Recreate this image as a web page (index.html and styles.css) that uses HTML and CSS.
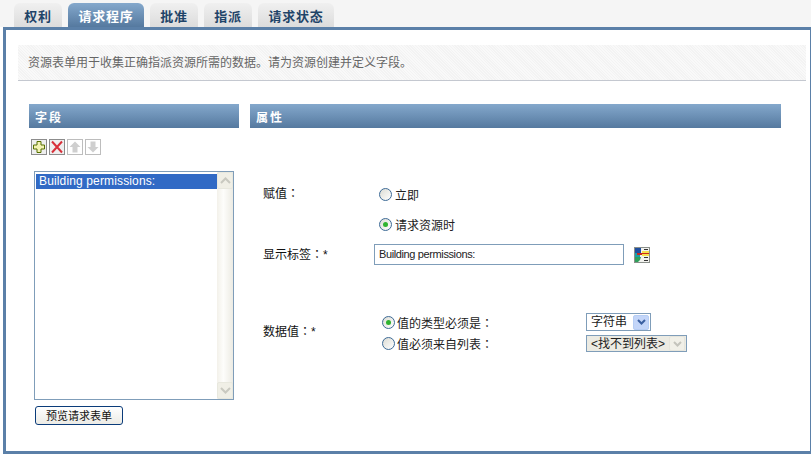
FILE: index.html
```html
<!DOCTYPE html>
<html lang="zh-CN">
<head>
<meta charset="utf-8">
<title>请求程序</title>
<link rel="stylesheet" href="styles.css">
</head>
<body>
<nav class="tabs">
  <a class="tab tab-short">权利</a>
  <a class="tab tab-long tab-active">请求程序</a>
  <a class="tab tab-short">批准</a>
  <a class="tab tab-short">指派</a>
  <a class="tab tab-long">请求状态</a>
</nav>
<main class="panel">
  <p class="info">资源表单用于收集正确指派资源所需的数据。请为资源创建并定义字段。</p>
  <div class="columns">
    <section class="col-fields">
      <h2 class="head">字段</h2>
      <div class="toolbar">
        <span class="tool">
          <svg width="14" height="14" viewBox="0 0 14 14"><path d="M5 1.500h4v3.500h3.500v4H9v3.500H5V9H1.500V5H5z" fill="#f3f3b4" stroke="#566f00"/></svg>
        </span>
        <span class="tool">
          <svg width="14" height="14" viewBox="0 0 14 14"><path d="M2 1.500l10 11M12 1.500L2 12.500" fill="none" stroke="#d8303a" stroke-width="2"/></svg>
        </span>
        <span class="tool tool-off">
          <svg width="14" height="14" viewBox="0 0 14 14"><path d="M7 1.500l5.500 5.500H9.500v5.500h-5V7H1.500z" fill="#cfcfcf"/></svg>
        </span>
        <span class="tool tool-off">
          <svg width="14" height="14" viewBox="0 0 14 14"><path d="M7 12.500L1.500 7h3V1.500h5V7h3z" fill="#cfcfcf"/></svg>
        </span>
      </div>
      <div class="listbox">
        <ul class="list-items">
          <li class="list-item">Building permissions:</li>
        </ul>
        <div class="scrollbar">
          <span class="scroll-btn"><svg width="11" height="7" viewBox="0 0 11 7"><path d="M1 6l4.500-4.500L10 6" fill="none" stroke="#c9c9c0" stroke-width="2"/></svg></span>
          <span class="scroll-btn"><svg width="11" height="7" viewBox="0 0 11 7"><path d="M1 1l4.500 4.500L10 1" fill="none" stroke="#c9c9c0" stroke-width="2"/></svg></span>
        </div>
      </div>
      <button class="btn" type="button">预览请求表单</button>
    </section>
    <section class="col-props">
      <h2 class="head">属性</h2>
      <div class="form" lang="zh-TW">
        <div class="row row-assign">
          <span class="label">赋值：</span>
          <div class="radio-stack">
            <label class="radio-line"><span class="radio"></span><span class="radio-text">立即</span></label>
            <label class="radio-line"><span class="radio radio-on"><span class="dot"></span></span><span class="radio-text">请求资源时</span></label>
          </div>
        </div>
        <div class="row row-display">
          <span class="label">显示标签：*</span>
          <div class="text-field">Building permissions:</div>
          <svg class="picker" width="16" height="16" viewBox="0 0 16 16">
            <rect width="16" height="16" fill="#8a8f8a"/>
            <rect x="1" y="1" width="14" height="14" fill="#f2f2ee"/>
            <path d="M1 1h6v5H1z" fill="#1f4f9f"/>
            <path d="M1 6h5v4H1z" fill="#17a0a8"/>
            <path d="M1 10h6l-1 3-2 2H1z" fill="#2f9f5a"/>
            <rect x="3" y="6" width="6" height="2" fill="#c8281e"/>
            <rect x="8" y="4" width="7" height="5" fill="#f4e04c"/>
            <rect x="8" y="6" width="7" height="1" fill="#c8281e"/>
            <path d="M10 2h4v1h-4zM10 10h4v1h-4zM10 13h4v1h-4z" fill="#333"/>
          </svg>
        </div>
        <div class="row row-data">
          <span class="label label-data">数据值：*</span>
          <div class="data-grid">
            <label class="radio-line radio-line-tight"><span class="radio radio-on"><span class="dot"></span></span><span class="radio-text">值的类型必须是：</span></label>
            <div class="select">
              <span class="select-text">字符串</span>
              <span class="select-arrow"><svg width="9" height="6" viewBox="0 0 9 6"><path d="M1 1l3.500 3.500L8 1" fill="none" stroke="#3a5fa0" stroke-width="2"/></svg></span>
            </div>
            <label class="radio-line radio-line-tight"><span class="radio"></span><span class="radio-text">值必须来自列表：</span></label>
            <div class="select select-off">
              <span class="select-text">&lt;找不到列表&gt;</span>
              <span class="select-arrow"><svg width="9" height="6" viewBox="0 0 9 6"><path d="M1 1l3.500 3.500L8 1" fill="none" stroke="#c4c4bc" stroke-width="2"/></svg></span>
            </div>
          </div>
        </div>
      </div>
    </section>
  </div>
</main>
</body>
</html>
```

FILE: styles.css
```css
* { box-sizing: border-box; }

html, body {
  margin: 0;
  height: 457px;
  overflow: hidden;
  background: #fff;
}

body {
  width: 811px;
  font-family: "Liberation Sans", "Noto Sans CJK SC", sans-serif;
  font-size: 12px;
  color: #222;
}

.tabs {
  display: flex;
  align-items: flex-end;
  gap: 6px;
  height: 27px;
  padding-left: 14px;
  background: #f5f5f5;
}

.tab {
  display: flex;
  align-items: center;
  justify-content: center;
  height: 24px;
  border-radius: 6px 6px 0 0;
  background: linear-gradient(#f0f0f0, #dcdcdc);
  color: #1f4468;
  font-weight: 700;
  font-size: 13px;
  letter-spacing: 0.8px;
}

.tab-short { width: 48px; }
.tab-long { width: 76px; }

.tab-active {
  background: linear-gradient(#84a8cc, #55799f);
  color: #fff;
}

.panel {
  width: 808px;
  height: 427px;
  margin-left: 3px;
  border: solid #5b80a8;
  border-width: 3px 1px 3px 3px;
  background: #fff;
}

.info {
  width: 788px;
  height: 36px;
  margin: 15px 0 0 12px;
  padding-left: 10px;
  line-height: 37px;
  color: #666;
  background-color: #f6f6f6;
  background-image: repeating-linear-gradient(45deg, #f9f9f9 0 1px, #f3f3f3 1px 2px);
  border-bottom: 1px solid #c4c8d0;
}

.columns {
  display: flex;
  gap: 11px;
  margin: 23px 0 0 23px;
}

.col-fields { width: 210px; }
.col-props { width: 531px; }

.head {
  height: 24px;
  margin: 0;
  padding-left: 6px;
  background: linear-gradient(#84a8cc, #55799f);
  color: #fff;
  font-size: 12px;
  font-weight: 700;
  letter-spacing: 2px;
  line-height: 28px;
}

.toolbar {
  display: flex;
  gap: 2px;
  margin: 11px 0 0 2px;
}

.tool {
  display: flex;
  align-items: center;
  justify-content: center;
  width: 16px;
  height: 16px;
  border: 1px solid #8c8c8c;
  background: #efefef;
}

.tool-off {
  border-color: #bdbdbd;
  background: #fff;
}

.listbox {
  display: flex;
  width: 200px;
  height: 229px;
  margin: 16px 0 0 5px;
  padding: 1px 0 1px 1px;
  border: 1px solid #7f9db9;
}

.list-items {
  flex: 1;
  margin: 0;
  padding: 0;
  list-style: none;
}

.list-item {
  height: 15px;
  margin-top: 1px;
  padding-left: 3px;
  background: #316ac5;
  color: #fff;
  font-size: 12px;
  letter-spacing: 0.14px;
  line-height: 15px;
}

.scrollbar {
  display: flex;
  flex-direction: column;
  justify-content: space-between;
  width: 16px;
  margin: -1px 0;
  background: linear-gradient(90deg, #f3f1ea, #fdfdfb 40%, #ecebe3);
}

.scroll-btn {
  display: flex;
  align-items: center;
  justify-content: center;
  height: 17px;
  border: 1px solid #e8e8de;
  border-radius: 2px;
  background: #f0efe6;
}

.btn {
  display: block;
  width: 88px;
  height: 19px;
  margin: 6px 0 0 6px;
  padding: 1px 0 0;
  border: 1px solid #0b3c7a;
  border-radius: 3px;
  background: linear-gradient(#fff, #ecebe5);
  color: #111;
  font: 11px "Liberation Sans", "Noto Sans CJK SC", sans-serif;
  line-height: 15px;
}

.form {
  margin: 57px 0 0 13px;
}

.row {
  display: grid;
  grid-template-columns: 111px auto;
  font-size: 12px;
}

.label {
  color: #111;
  font-family: "Liberation Sans", "Noto Sans CJK TC", sans-serif;
  line-height: 14px;
}

.row-assign .label { margin-top: 2px; }

.radio-stack {
  display: flex;
  flex-direction: column;
  gap: 12px;
  padding-left: 5px;
}

.radio-line {
  display: flex;
  align-items: center;
  gap: 3px;
  height: 18px;
  color: #222;
  font-family: "Liberation Sans", "Noto Sans CJK TC", sans-serif;
}

.radio {
  display: flex;
  align-items: center;
  justify-content: center;
  width: 13px;
  height: 13px;
  border: 1px solid #3d6a96;
  border-radius: 50%;
  background: linear-gradient(135deg, #dcdcd4, #fff);
}

.dot {
  width: 5px;
  height: 5px;
  border-radius: 50%;
  background: #2fb32f;
}

.row-display {
  grid-template-columns: 111px 250px auto;
  align-items: center;
  margin-top: 11px;
}

.text-field {
  height: 21px;
  padding-left: 4px;
  border: 1px solid #7f9db9;
  font-size: 11px;
  letter-spacing: -0.38px;
  line-height: 19px;
  color: #222;
}

.picker { margin-left: 10px; }

.row-data {
  align-items: center;
  margin-top: 48px;
}

.label-data { margin-top: -2px; }

.data-grid {
  display: grid;
  grid-template-columns: 204px auto;
  grid-template-rows: 18px 17px;
  row-gap: 4px;
  padding-left: 8px;
  align-items: center;
}

.radio-line-tight {
  gap: 2px;
  height: 17px;
}

.select {
  display: flex;
  align-items: center;
  justify-content: space-between;
  width: 65px;
  height: 18px;
  padding: 0 1px 0 4px;
  border: 1px solid #7f9db9;
  color: #222;
  line-height: 16px;
}

.select-off {
  width: 101px;
  height: 17px;
  background: #ecebe3;
}

.select-off .select-arrow {
  background: #f1f0e8;
  border-color: #e6e5dc;
}

.select-arrow {
  display: flex;
  align-items: center;
  justify-content: center;
  width: 16px;
  height: 15px;
  border: 1px solid #b6cdf4;
  border-radius: 2px;
  background: #c3d5f8;
}
```
